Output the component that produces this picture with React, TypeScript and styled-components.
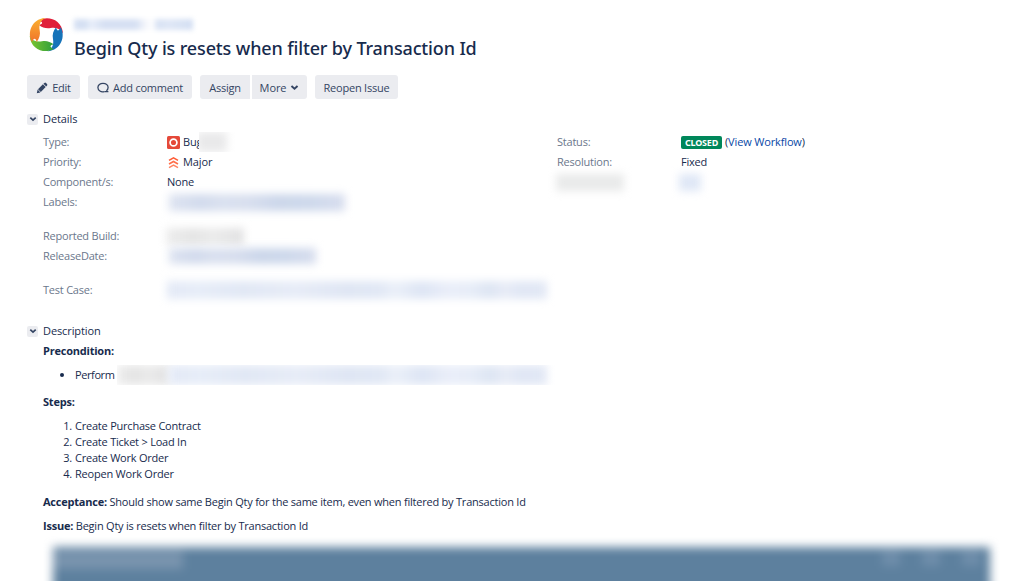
import React from "react";
import styled, { createGlobalStyle } from "styled-components";

const GlobalStyle = createGlobalStyle`
  * { box-sizing: border-box; }
  body { margin: 0; background: #fff; }
`;

const Page = styled.main`
  width: 1023px;
  height: 581px;
  overflow: hidden;
  padding: 15px 0 0 27px;
  font-family: "Open Sans", "Noto Sans", sans-serif;
  font-size: 11px;
  line-height: 20px;
  letter-spacing: -0.22px;
  color: #172b4d;
`;

const Header = styled.header`
  display: flex;
  height: 60px;
  gap: 8px;
`;

const Logo = styled.svg`
  width: 39px;
  height: 40px;
  margin-top: 1px;
`;

const Heading = styled.div`
  display: flex;
  flex-direction: column;
`;

const Title = styled.h1`
  margin: 6px 0 0;
  font-family: "Noto Sans", sans-serif;
  font-size: 18px;
  font-weight: 500;
  line-height: 24px;
  letter-spacing: -0.14px;
  white-space: nowrap;
`;

const T = styled.span<{ $ls?: number }>`
  ${(p) => (p.$ls === undefined ? "" : `letter-spacing: ${p.$ls}px;`)}
  white-space: nowrap;
`;

const Toolbar = styled.nav`
  display: flex;
  gap: 8px;
  height: 24px;
`;

const ButtonGroup = styled.div`
  display: flex;
  gap: 2px;
`;

const Button = styled.button<{ $w: number; $side?: "left" | "right" }>`
  display: flex;
  align-items: center;
  justify-content: center;
  gap: 4px;
  width: ${(p) => p.$w}px;
  height: 24px;
  padding: 1px 0 0;
  border: 0;
  border-radius: ${(p) =>
    p.$side === "left" ? "3px 0 0 3px" : p.$side === "right" ? "0 3px 3px 0" : "3px"};
  background: #ebecf0;
  color: #344563;
  font: inherit;
  letter-spacing: inherit;
`;

const SectionHead = styled.h2`
  display: flex;
  align-items: center;
  gap: 5px;
  height: 20px;
  margin: 0;
  font-size: 11px;
  font-weight: 400;
  letter-spacing: -0.1px;
`;

const Toggle = styled.span`
  display: flex;
  align-items: center;
  justify-content: center;
  width: 11px;
  height: 11px;
  border-radius: 2px;
  background: #ebecf0;
`;

const Details = styled.section`
  height: 222px;
  padding-top: 10px;
`;

const Columns = styled.div`
  display: flex;
  padding: 3px 0 0 16px;
`;

const Column = styled.div<{ $w: number }>`
  width: ${(p) => p.$w}px;
`;

const Field = styled.div<{ $after?: number }>`
  display: flex;
  align-items: center;
  height: 20px;
  margin-bottom: ${(p) => p.$after ?? 0}px;
`;

const Label = styled.span`
  width: 124px;
  flex: none;
  color: #6b778c;
`;

const Value = styled.span`
  display: flex;
  align-items: center;
  gap: 3px;
`;

const Badge = styled.b`
  width: 41px;
  height: 13px;
  border-radius: 2px;
  background: #00875a;
  color: #fff;
  font-family: "Noto Sans", sans-serif;
  font-size: 9px;
  line-height: 13px;
  text-align: center;
`;

const Link = styled.a`
  color: #0747a6;
`;

const Smudge = styled.span<{
  $w: number;
  $h: number;
  $fill: string;
  $blur?: number;
  $shift?: number;
  $drop?: number;
}>`
  display: block;
  flex: none;
  width: ${(p) => p.$w}px;
  height: ${(p) => p.$h}px;
  margin-left: ${(p) => p.$shift ?? 0}px;
  margin-top: ${(p) => p.$drop ?? 0}px;
  background: ${(p) => p.$fill};
  filter: blur(${(p) => p.$blur ?? 4}px);
`;

const Clip = styled.span<{ $w: number; $shift?: number }>`
  display: flex;
  align-items: center;
  flex: none;
  overflow: hidden;
  width: ${(p) => p.$w}px;
  height: 20px;
  margin-left: ${(p) => p.$shift ?? 0}px;
  background: #fff;
`;

const Description = styled.section`
  padding-left: 16px;
`;

const Line = styled.p<{ $after?: number }>`
  height: 20px;
  margin: 0 0 ${(p) => p.$after ?? 0}px;
  white-space: nowrap;
`;

const Bullets = styled.ul`
  height: 20px;
  margin: 4px 0 7px;
  padding: 0;
  list-style: none;
`;

const Bullet = styled.li`
  display: flex;
  align-items: center;
  height: 20px;
  padding-left: 17px;
`;

const Dot = styled.i`
  width: 4px;
  height: 4px;
  margin-right: 11px;
  border-radius: 50%;
  background: #172b4d;
`;

const BulletText = styled.span`
  width: 42px;
  letter-spacing: -0.4px;
`;

const Steps = styled.ol`
  margin: 6px 0 10px;
  padding: 0;
  list-style: none;
  line-height: 16px;
`;

const Step = styled.li`
  display: flex;
  height: 16px;
`;

const Num = styled.span`
  width: 32px;
  padding-right: 3px;
  text-align: right;
`;

const Attachment = styled.div`
  width: 980px;
  height: 60px;
  margin-top: -1px;
  overflow: hidden;
  padding: 12px 0 0 10px;
`;

const Screen = styled.div`
  display: flex;
  justify-content: space-between;
  width: 937px;
  height: 80px;
  padding-top: 4px;
  background: #5d809e;
  filter: blur(5px);
`;

const Shade = styled.span<{ $w: number }>`
  width: ${(p) => p.$w}px;
  height: 18px;
  background: #7994ae;
`;

const Shades = styled.span`
  display: flex;
  gap: 22px;
  padding-right: 10px;
`;

const Faint = styled.span`
  width: 18px;
  height: 15px;
  background: #6f8eab;
`;

const BLUE =
  "linear-gradient(90deg,#dde3f1,#d1daec 18%,#d9e0ef 30%,#d7deee 45%,#cbd6ea 62%,#cdd8eb 80%,#d7ddee)";
const PALE =
  "linear-gradient(90deg,#e3e9f6,#e7edf8 8%,#e1e8f5 20%,#e7ecf7 34%,#dfe6f4 47%,#e1e8f5 56%,#ebf0f9 60%,#dde5f4 67%,#eaeef9 74%,#e7edf8 80%,#dde5f3 85%,#e8ecf7 89%,#e0e7f5 93%,#e2e8f5)";
const GREY = "linear-gradient(90deg,#ededed,#e4e4e4 35%,#ebebeb 60%,#e1e1e2)";

const BLADE = "M-22-43C4-58 47-46 50-3C43-17 31-23 13-20C1-17-12-21-22-29C-10-32-9-37-22-43Z";

const Chevron = ({ size }: { size: number }) => (
  <svg width={size} height={size} viewBox="0 0 8 8" fill="none">
    <path d="M1.3 2.6 4 5.1 6.7 2.6" stroke="#344563" strokeWidth="1.7" />
  </svg>
);

export default function App() {
  return (
    <Page>
      <GlobalStyle />
      <Header>
        <Logo viewBox="-58 -56 117 120">
          <defs>
            <linearGradient id="warm" x1="0" y1="0" x2="1" y2="0">
              <stop offset="0" stopColor="#f0742b" />
              <stop offset="1" stopColor="#fbb130" />
            </linearGradient>
            <linearGradient id="leaf" x1="0" y1="0" x2="1" y2="0">
              <stop offset="0" stopColor="#2f9f3c" />
              <stop offset="1" stopColor="#7cc62f" />
            </linearGradient>
          </defs>
          <path d={BLADE} fill="#e01f39" />
          <path d={BLADE} fill="#1673b9" transform="rotate(90)" />
          <path d={BLADE} fill="url(#leaf)" transform="rotate(180)" />
          <path d={BLADE} fill="url(#warm)" transform="rotate(270)" />
        </Logo>
        <Heading>
          <Smudge
            $w={119}
            $h={11}
            $drop={4}
            $blur={2.5}
            $fill="linear-gradient(90deg,#d5e0f3 10%,#e9effa 14%,#d6e0f3 25%,#d6e0f3 52%,#f4f6fb 60%,#fff 66%,#d8e2f4 70%,#dfe7f6 80%,#d3dff3)"
          />
          <Title>Begin Qty is resets when filter by Transaction Id</Title>
        </Heading>
      </Header>

      <Toolbar>
        <Button $w={53}>
          <svg width="12" height="12" viewBox="0 0 12 12" fill="#344563">
            <path d="M.8 11.2 1.6 7.6 4.4 10.4ZM2 7.2 6.9 2.3 9.7 5.1 4.8 10ZM7.4 1.8 8.4.9Q9.3.3 10 1L11 2Q11.7 2.7 11.1 3.6L10.2 4.6Z" />
          </svg>
          <T>Edit</T>
        </Button>
        <Button $w={104}>
          <svg width="12" height="12" viewBox="0 0 12 12" fill="none" stroke="#344563" strokeWidth="1.3">
            <path d="M7.2 9.6C4 10.4.9 8.6.9 5.6.9 3.1 3.1 1.3 6 1.3S11.1 3.1 11.1 5.6C11.1 7 10.4 8 9.4 8.8M7.4 9.7H11.4" />
          </svg>
          <T>Add comment</T>
        </Button>
        <ButtonGroup>
          <Button $w={50} $side="left"><T>Assign</T></Button>
          <Button $w={55} $side="right"><T $ls={-0.1}>More</T><Chevron size={9} /></Button>
        </ButtonGroup>
        <Button $w={83}><T>Reopen Issue</T></Button>
      </Toolbar>

      <Details>
        <SectionHead><Toggle><Chevron size={8} /></Toggle>Details</SectionHead>
        <Columns>
          <Column $w={514}>
            <Field>
              <Label>Type:</Label>
              <Value>
                <svg width="13" height="13" viewBox="0 0 13 13">
                  <rect width="13" height="13" rx="1.5" fill="#e5493a" />
                  <circle cx="6.5" cy="6.5" r="3.4" fill="none" stroke="#fff" strokeWidth="1.7" />
                </svg>
                <T>Bug</T>
              </Value>
              <Clip $w={44} $shift={-3}><Smudge $w={30} $h={20} $shift={-2} $fill="#e9e9ea" $blur={4} /></Clip>
            </Field>
            <Field>
              <Label>Priority:</Label>
              <Value>
                <svg width="13" height="13" viewBox="0 0 13 13" fill="none" strokeWidth="1.6">
                  <path d="M2 4.4 6.5 1.9 11 4.4" stroke="#ff5b35" />
                  <path d="M2 8 6.5 5.5 11 8" stroke="#ff6f4a" />
                  <path d="M2 11.6 6.5 9.1 11 11.6" stroke="#ff8463" />
                </svg>
                <T $ls={-0.1}>Major</T>
              </Value>
            </Field>
            <Field><Label>Component/s:</Label><T>None</T></Field>
            <Field $after={14}>
              <Label>Labels:</Label>
              <Smudge $w={176} $h={17} $shift={2} $fill={BLUE} />
            </Field>
            <Field>
              <Label>Reported Build:</Label>
              <Smudge $w={78} $h={17} $shift={-1} $fill={GREY} />
            </Field>
            <Field $after={14}>
              <Label>ReleaseDate:</Label>
              <Smudge $w={147} $h={16} $shift={2} $drop={-1} $fill={BLUE} />
            </Field>
            <Field>
              <Label>Test Case:</Label>
              <Smudge $w={380} $h={18} $fill={PALE} />
            </Field>
          </Column>
          <Column $w={400}>
            <Field>
              <Label>Status:</Label>
              <Value><Badge>CLOSED</Badge><T $ls={-0.15}>(<Link>View Workflow</Link>)</T></Value>
            </Field>
            <Field><Label>Resolution:</Label><T>Fixed</T></Field>
            <Field>
              <Smudge $w={68} $h={17} $shift={-1} $fill="#e9eaea" />
              <Smudge $w={22} $h={17} $shift={55} $fill="#dfe7f6" />
            </Field>
          </Column>
        </Columns>
      </Details>

      <SectionHead><Toggle><Chevron size={8} /></Toggle>Description</SectionHead>
      <Description>
        <Line><b>Precondition:</b></Line>
        <Bullets>
          <Bullet>
            <Dot />
            <BulletText>Perform</BulletText>
            <Clip $w={440}>
              <Smudge $w={52} $h={20} $fill={GREY} />
              <Smudge $w={378} $h={20} $fill={PALE} />
            </Clip>
          </Bullet>
        </Bullets>
        <Line><b>Steps:</b></Line>
        <Steps>
          <Step><Num>1.</Num><T>Create Purchase Contract</T></Step>
          <Step><Num>2.</Num><T>Create Ticket &gt; Load In</T></Step>
          <Step><Num>3.</Num><T>Create Work Order</T></Step>
          <Step><Num>4.</Num><T>Reopen Work Order</T></Step>
        </Steps>
        <Line $after={4}><b>Acceptance:</b> Should show same Begin Qty for the same item, even when filtered by Transaction Id</Line>
        <Line><b>Issue:</b> Begin Qty is resets when filter by Transaction Id</Line>
        <Attachment>
          <Screen>
            <Shade $w={130} />
            <Shades><Faint /><Faint /><Faint /></Shades>
          </Screen>
        </Attachment>
      </Description>
    </Page>
  );
}
